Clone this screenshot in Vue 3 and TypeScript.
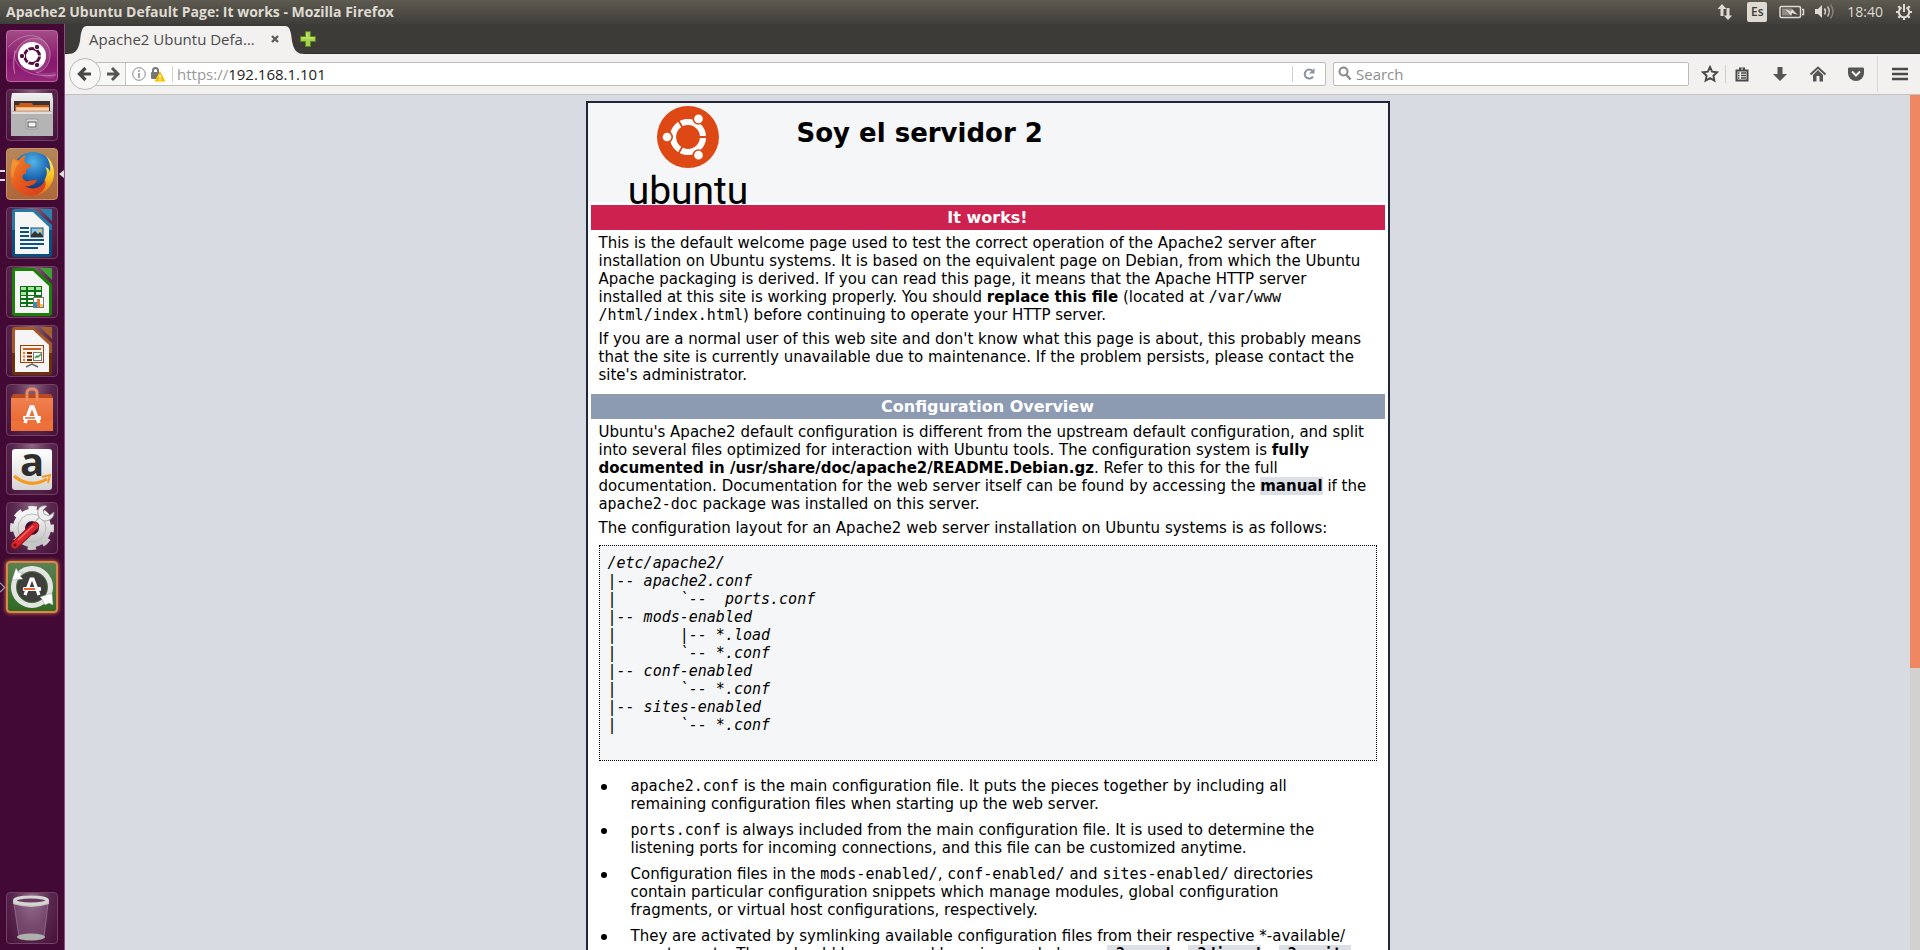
<script setup lang="ts">
import { ref } from 'vue'

const host = ref('192.168.1.101')
const query = ref('')

const tree = `/etc/apache2/
|-- apache2.conf
|       \`--  ports.conf
|-- mods-enabled
|       |-- *.load
|       \`-- *.conf
|-- conf-enabled
|       \`-- *.conf
|-- sites-enabled
|       \`-- *.conf

`
</script>

<template>
  <div class="desktop">
    <header class="panel">
      <span class="window-title">Apache2 Ubuntu Default Page: It works - Mozilla Firefox</span>
      <div class="indicators">
        <svg class="i-net" width="16" height="18" viewBox="0 0 16 18" fill="#dfdbd2">
          <path d="M5 1L9.500 6H6.500V13H3.500V6H0.500Z" />
          <path d="M11 17L6.800 12.500H9.500V5H12.500V12.500H15.200Z" />
        </svg>
        <span class="lang">Es</span>
        <svg class="i-bat" width="26" height="14" viewBox="0 0 26 14">
          <rect x="1" y="1.500" width="20.500" height="11" rx="1.500" fill="none" stroke="#dfdbd2" stroke-width="1.500" />
          <rect x="3" y="3.500" width="10" height="7" fill="#8e8b83" />
          <path d="M23 4.500h1.500v5H23" fill="none" stroke="#dfdbd2" stroke-width="1.500" />
          <path d="M6 4l6 2.500 1-2.500 6 6-6-2-1 2.500z" fill="#dfdbd2" />
        </svg>
        <svg class="i-vol" width="20" height="18" viewBox="0 0 20 18" fill="none">
          <path d="M0 6h3l4-4v13l-4-4H0z" fill="#dfdbd2" />
          <path d="M9.500 5.500q2 3 0 6" stroke="#dfdbd2" stroke-width="1.500" />
          <path d="M12.500 3.500q3.500 5 0 10" stroke="#c5c1b9" stroke-width="1.500" />
          <path d="M15.500 1.500q5 7 0 14" stroke="#858279" stroke-width="1.500" />
        </svg>
        <span class="clock">18:40</span>
        <svg class="i-gear" width="18" height="18" viewBox="0 0 18 18" fill="none" stroke="#dfdbd2">
          <path d="M6.500 4.500A5.200 5.200 0 1 0 11.500 4.500" stroke-width="2" />
          <path d="M9 1v8" stroke-width="2" />
          <path d="M1 9h3M14 9h3M3.300 3.300l2 2M14.700 3.300l-2 2M3.300 14.700l2-2M14.700 14.700l-2-2M9 14v3" stroke-width="2.200" />
        </svg>
      </div>
    </header>

    <nav class="launcher" aria-label="Launcher">
      <button class="tile dash" aria-label="Dash">
        <svg viewBox="0 0 52 52">
          <g fill="none" stroke="#e3b4d6" stroke-opacity=".45">
            <path d="M9 44C2 22 18 4 34 9 50 16 46 40 30 43" />
            <path d="M50 45C22 49 5 35 9 20M2 17C16 2 34 2 42 16" />
          </g>
          <path d="M9 44C2 22 18 4 34 9 50 16 46 40 30 43 46 52 50 48 50 42 30 46 12 40 9 20z" fill="#fff" fill-opacity=".12" />
          <circle cx="26" cy="26" r="14" fill="#fff" />
          <circle cx="26" cy="26" r="7.500" fill="none" stroke="#54103f" stroke-width="3" />
          <path d="M26 26h11M26 26l-6-10M26 26l-6 10" stroke="#fff" stroke-width="1.200" />
          <circle cx="26" cy="26" r="5.500" fill="#fff" />
          <g fill="#54103f" stroke="#fff"><circle cx="16" cy="26" r="2.700" /><circle cx="31" cy="17" r="2.700" /><circle cx="31" cy="35" r="2.700" /></g>
        </svg>
      </button>
      <button class="tile" aria-label="Files">
        <svg viewBox="0 0 52 52">
          <defs><linearGradient id="cab" x1="0" y1="0" x2="0" y2="1"><stop offset="0" stop-color="#f2f2f2" /><stop offset="1" stop-color="#aaa" /></linearGradient></defs>
          <path d="M6 4h40l1 6v33H5V10z" fill="url(#cab)" />
          <rect x="8" y="12" width="36" height="12" fill="#3d3431" />
          <path d="M9 16h4l1-2h12l1 2h16v8H9z" fill="#c85a1b" />
          <path d="M10 18h33v4H10z" fill="#f6ae72" />
          <path d="M11 20h32" stroke="#fff2dc" />
          <path d="M6 22h40l1 3v22H5V25z" fill="#b4b4b4" />
          <path d="M6 24h40" stroke="#ddd" stroke-width="2" />
          <rect x="20" y="30" width="12" height="10" rx="2" fill="#d8d8d8" stroke="#999" />
          <rect x="22" y="33" width="8" height="5" fill="#f3f3f3" stroke="#555" />
        </svg>
      </button>
      <button class="tile fox running" aria-label="Firefox">
        <svg viewBox="0 0 52 52">
          <defs>
            <radialGradient id="globe" cx=".5" cy=".25" r=".7"><stop offset="0" stop-color="#53b4e8" /><stop offset=".55" stop-color="#1e6ab5" /><stop offset="1" stop-color="#132f6b" /></radialGradient>
            <linearGradient id="fire" x1="0" y1="0" x2="1" y2="1"><stop offset="0" stop-color="#f08b2c" /><stop offset=".5" stop-color="#e5571d" /><stop offset="1" stop-color="#d33b1c" /></linearGradient>
            <linearGradient id="tail" x1="0" y1="0" x2="0" y2="1"><stop offset="0" stop-color="#fff27a" /><stop offset=".5" stop-color="#fbc623" /><stop offset="1" stop-color="#ea6a1c" /></linearGradient>
          </defs>
          <circle cx="27" cy="24" r="20" fill="url(#globe)" />
          <path d="M40 8C50 16 50 30 44 38 38 47 28 49 20 46 32 46 38 40 39 31 42 26 41 21 39 19 43 20 43 22 44 24 45 18 43 12 40 8z" fill="url(#tail)" />
          <path d="M7 10C9 12 11 12 13 12 15 9 18 8 20 7 18 10 18 13 19 15L25 17C25 20 22 20 20 22L20 26C17 25 15 29 18 32 22 35 27 31 31 32 29 37 23 39 19 38 26 43 36 40 39 32 42 40 34 48 24 48 12 47 4 38 4 27 4 20 6 15 7 10z" fill="url(#fire)" />
          <path d="M7 11C5 17 4 24 7 31 8 21 11 17 14 15z" fill="#f59c35" fill-opacity=".7" />
        </svg>
      </button>
      <button class="tile" aria-label="LibreOffice Writer">
        <svg viewBox="0 0 52 52">
          <path d="M9 2h19l18 16v29q0 3-3 3H9q-3 0-3-3V5q0-3 3-3z" fill="#0b4f7f" />
          <path d="M9 2h19l18 16v5H6V5q0-3 3-3z" fill="#2b77a5" />
          <path d="M9 5h18l16 15v27H9z" fill="#f5f5f5" />
          <path d="M34 2h12v12z" fill="#2f80ac" />
          <path d="M14 21h9M14 25h9M14 29h9M14 33h24M14 37h24M14 41h18" stroke="#0e537f" stroke-width="2" />
          <rect x="25" y="21" width="12" height="9" fill="#8fc7e8" stroke="#0e537f" />
          <path d="M25 30v-2l4-4 3 3 2-2 3 4v1z" fill="#333" />
          <circle cx="34" cy="23.500" r="1.500" fill="#f4c842" />
        </svg>
      </button>
      <button class="tile" aria-label="LibreOffice Calc">
        <svg viewBox="0 0 52 52">
          <path d="M9 2h19l18 16v29q0 3-3 3H9q-3 0-3-3V5q0-3 3-3z" fill="#1b8007" />
          <path d="M9 5h18l16 15v27H9z" fill="#f5f5f5" />
          <path d="M34 2h12v12z" fill="#3fa136" />
          <rect x="14" y="20" width="22" height="21" fill="#0e7015" />
          <g fill="#a9e3a0"><path d="M15 21h5v3h-5zM22 21h6v3h-6zM30 21h5v3h-5zM15 26h5v3h-5z" /></g>
          <path d="M22 26h6v3h-6zM30 26h5v3h-5zM15 30h5v2h-5zM22 30h6v2h-6zM15 34h5v2h-5zM22 34h6v2h-6zM15 38h5v2h-5zM22 38h6v2h-6z" fill="#f0fff0" />
          <rect x="27.500" y="31.500" width="10" height="10" fill="#fff" stroke="#777" />
          <path d="M28 36h3v5h-3z" fill="#2c8ed0" /><path d="M31 33h3v8h-3z" fill="#e57524" /><path d="M34 38h3v3h-3z" fill="#f4c842" />
        </svg>
      </button>
      <button class="tile" aria-label="LibreOffice Impress">
        <svg viewBox="0 0 52 52">
          <path d="M9 2h19l18 16v29q0 3-3 3H9q-3 0-3-3V5q0-3 3-3z" fill="#6b3008" />
          <path d="M9 2h19l18 16v10H6V5q0-3 3-3z" fill="#a4592a" />
          <path d="M9 5h18l16 15v27H9z" fill="#f5f5f5" />
          <path d="M34 2h12v12z" fill="#a4602f" />
          <rect x="14.500" y="20.500" width="23" height="17" fill="#fdf3ea" stroke="#a33e03" />
          <path d="M17 24h18" stroke="#c2622a" stroke-width="2" />
          <path d="M17 28h2M17 31.500h2M17 35h2" stroke="#e7774b" stroke-width="2" />
          <path d="M21 28h5M21 31.500h5M21 35h5" stroke="#7a2a00" stroke-width="2" />
          <rect x="27.500" y="27.500" width="8" height="8" fill="#fff" stroke="#777" />
          <path d="M29 33l2-2 1 1 3-3" fill="none" stroke="#2b9b35" stroke-width="1.500" />
          <path d="M26 38v2M20 42l6-3 6 3" fill="none" stroke="#666" stroke-width="1.500" />
        </svg>
      </button>
      <button class="tile" aria-label="Ubuntu Software">
        <svg viewBox="0 0 52 52">
          <defs><linearGradient id="bag" x1="0" y1="0" x2="0" y2="1"><stop offset="0" stop-color="#ef8150" /><stop offset="1" stop-color="#e8612a" /></linearGradient></defs>
          <path d="M5 14l2-4h38l2 4z" fill="#b84a1e" />
          <rect x="5" y="14" width="42" height="33" fill="url(#bag)" />
          <path d="M5 37h42v10H5z" fill="#f0783f" fill-opacity=".6" />
          <path d="M21 17V9q0-4 5-4t5 4v8" fill="none" stroke="#e88c62" stroke-width="3" />
          <path d="M19 39L25 23h2l6 16" fill="none" stroke="#fff" stroke-width="3.500" />
          <rect x="17" y="32" width="18" height="4" rx="1" fill="#fff" />
          <path d="M19 34h10" stroke="#e8612a" stroke-width="1.500" />
        </svg>
      </button>
      <button class="tile" aria-label="Amazon">
        <svg viewBox="0 0 52 52">
          <defs><linearGradient id="amz" x1="0" y1="0" x2="0" y2="1"><stop offset="0" stop-color="#fff" /><stop offset="1" stop-color="#d4d4d4" /></linearGradient></defs>
          <rect x="6" y="6" width="40" height="41" rx="3" fill="url(#amz)" />
          <text x="26" y="33" text-anchor="middle" class="amazon-a">a</text>
          <path d="M8 33q16 13 33 3" fill="none" stroke="#f79a1c" stroke-width="3" />
          <path d="M36 34l8-2-2 8" fill="none" stroke="#f79a1c" stroke-width="2" />
        </svg>
      </button>
      <button class="tile" aria-label="System Settings">
        <svg viewBox="0 0 52 52">
          <defs><linearGradient id="cog" x1="0" y1="0" x2="0" y2="1"><stop offset="0" stop-color="#f4f4f4" /><stop offset="1" stop-color="#c6c6c6" /></linearGradient></defs>
          <circle cx="26" cy="26" r="19" fill="none" stroke="url(#cog)" stroke-width="6" stroke-dasharray="8 6.920" stroke-dashoffset="4" />
          <circle cx="26" cy="26" r="13" fill="none" stroke="url(#cog)" stroke-width="12" />
          <circle cx="26" cy="26" r="14" fill="none" stroke="#bbb" />
          <circle cx="26" cy="26" r="6.500" fill="#3c0f35" />
          <path d="M27 26l8-9" stroke="#aaa" stroke-width="6" />
          <path d="M28 25L36 17" stroke="#eee" stroke-width="5" />
          <path d="M34 5q-4 4-1 10 4 6 10 3 5-2 5-8l-5 4-5-2-1-4 4-4q-3-1-7 1z" fill="#eee" stroke="#999" stroke-width=".8" />
          <path d="M9 43L29 24" stroke="#8e1218" stroke-width="8.500" stroke-linecap="round" />
          <path d="M9 43L29 24" stroke="#d9262c" stroke-width="6.500" stroke-linecap="round" />
          <path d="M12 38L27 24" stroke="#f0686a" stroke-width="1.500" />
          <circle cx="9" cy="43" r="1.500" fill="#5b0a0e" />
        </svg>
      </button>
      <button class="tile updater" aria-label="Software Updater">
        <svg viewBox="0 0 52 52">
          <circle cx="26" cy="26" r="15" fill="#3e3e3c" />
          <circle cx="26" cy="26" r="18.500" fill="none" stroke="#e4e4e2" stroke-width="5" />
          <path d="M10 7l-4 12 11-1-3-3 3-4-4 1z" fill="#fff" stroke="#999" stroke-width=".5" />
          <path d="M46 32l1 12-4-2-4 2-3-6-2-2z" fill="#fff" stroke="#999" stroke-width=".5" />
          <path d="M19 34L25 18h2l6 16" fill="none" stroke="#fff" stroke-width="3.200" />
          <rect x="17" y="26" width="18" height="4" rx="1" fill="#fff" />
          <path d="M18 28h11" stroke="#f0622a" stroke-width="2" />
        </svg>
      </button>
      <button class="tile trash" aria-label="Trash">
        <svg viewBox="0 0 52 52">
          <path d="M8 12l5 33q12 4 25 0l4-33z" fill="#c9a3c4" fill-opacity=".25" stroke="#b793b3" stroke-opacity=".5" />
          <ellipse cx="25" cy="45" rx="14" ry="3.500" fill="#aeb0ac" />
          <path d="M7 9v3q18 6 36 0V9q-18 6-36 0z" fill="#c2c2be" />
          <ellipse cx="25" cy="8.500" rx="16.500" ry="3.500" fill="#6a3a62" stroke="#d6d6d2" stroke-width="3" />
        </svg>
      </button>
    </nav>

    <div class="browser">
      <div class="tabs">
        <svg class="tab-edge" width="20" height="28" viewBox="0 0 20 28"><path d="M0 28C8 28 11 25 13 15 14 6 15 0 20 0V28z" fill="#f2f1f0" /></svg>
        <div class="tab">
          <span>Apache2 Ubuntu Defa…</span>
          <button aria-label="Close tab"><svg width="10" height="10" viewBox="0 0 10 10"><path d="M2 2l6 6M8 2l-6 6" stroke="#5d5d5b" stroke-width="2.400" /></svg></button>
        </div>
        <svg class="tab-edge" width="20" height="28" viewBox="0 0 20 28"><path d="M20 28C12 28 9 25 7 15 6 6 5 0 0 0V28z" fill="#f2f1f0" /></svg>
        <button class="new-tab" aria-label="New tab"><svg width="16" height="16" viewBox="0 0 16 16"><path d="M5.500 .5h5v5h5v5h-5v5h-5v-5h-5v-5h5z" fill="#a6cf4a" stroke="#5d8a1c" /><path d="M7 2v4M2 7h12" stroke="#d3ec92" /></svg></button>
      </div>

      <div class="toolbar">
        <button class="back" aria-label="Back"><svg width="16" height="16" viewBox="0 0 16 16"><path d="M14 8H3M8.500 2L2.500 8l6 6" fill="none" stroke="#474747" stroke-width="3.200" /></svg></button>
        <div class="urlbar">
          <button class="fwd" aria-label="Forward"><svg width="14" height="16" viewBox="0 0 14 16"><path d="M1 8h10M6 2l6 6-6 6" fill="none" stroke="#555" stroke-width="3" /></svg></button>
          <svg class="info" width="14" height="14" viewBox="0 0 14 14"><circle cx="7" cy="7" r="6.300" fill="none" stroke="#888" /><path d="M7 6v5M7 3v1.800" stroke="#888" stroke-width="1.500" /></svg>
          <svg class="lock" width="16" height="16" viewBox="0 0 16 16"><path d="M3 7V4.500Q3 2 5.500 2T8 4.500V7" fill="none" stroke="#777" stroke-width="2" /><rect x="1" y="6" width="9" height="7" rx="1" fill="#777" /><path d="M10 5l5.500 10.500h-11z" fill="#ffbf00" /><path d="M10 9v3M10 13v1.200" stroke="#fff" stroke-width="1.500" /></svg>
          <label class="scheme" for="address">https://</label>
          <input id="address" v-model="host" type="text" aria-label="Address" />
          <button class="reload" aria-label="Reload"><svg width="14" height="14" viewBox="0 0 14 14"><path d="M11 9.500A4.500 4.500 0 1 1 10.500 4" fill="none" stroke="#8794a2" stroke-width="2" /><path d="M12.500 1v5.500H7z" fill="#8794a2" /></svg></button>
        </div>
        <div class="search">
          <svg width="14" height="16" viewBox="0 0 14 16"><circle cx="5.500" cy="5.500" r="4" fill="none" stroke="#8a8a8a" stroke-width="2" /><path d="M8.500 9l4 4.500" stroke="#8a8a8a" stroke-width="2.500" /></svg>
          <input v-model="query" type="text" placeholder="Search" aria-label="Search" />
        </div>
        <div class="tools">
          <button class="star" aria-label="Bookmark"><svg viewBox="0 0 18 18"><path d="M9 2l2.100 4.700 5 .5-3.700 3.500 1 5L9 13.200l-4.400 2.500 1-5L1.900 7.200l5-.5z" fill="none" stroke="#4a4a4a" stroke-width="1.900" /></svg></button>
          <button aria-label="Bookmarks list"><svg viewBox="0 0 18 18"><path d="M2.500 4.500H6V2.500h6v2h3.500v12h-13z" fill="#4a4a4a" /><path d="M8 4h2" stroke="#f2f1f0" /><path d="M4.500 6.500h9v8h-9z" fill="#f2f1f0" /><path d="M5 8h1.500M8 8h5M5 10.500h1.500M8 10.500h5M5 13h1.500M8 13h5" stroke="#4a4a4a" stroke-width="1.300" /></svg></button>
          <button aria-label="Downloads"><svg viewBox="0 0 18 18"><path d="M6.500 2h5v7H16l-7 7-7-7h4.500z" fill="#555" /></svg></button>
          <button aria-label="Home"><svg viewBox="0 0 18 18"><path d="M1.500 9.500L9 2.500l7.500 7" fill="none" stroke="#555" stroke-width="2" /><path d="M4 10l5-5 5 5v6.500h-3.500V11h-3v5.500H4z" fill="#555" /></svg></button>
          <button aria-label="Pocket"><svg viewBox="0 0 18 18"><path d="M2 2.500h14q1 0 1 1.500v4a8 8 0 0 1-16 0V4q0-1.500 1-1.500z" fill="#555" /><path d="M5 6.500l4 4 4-4" fill="none" stroke="#f2f1f0" stroke-width="2" /></svg></button>
          <button class="menu" aria-label="Menu"><svg viewBox="0 0 18 18"><path d="M1 4h16M1 9h16M1 14h16" stroke="#4a4a4a" stroke-width="2.600" /></svg></button>
        </div>
      </div>

      <div class="viewport">
        <main class="canvas">
          <article class="page">
            <div class="page-header">
              <div class="logo">
                <svg width="62" height="62" viewBox="-31 -31 62 62">
                  <circle r="31" fill="#dd4814" />
                  <circle r="15" fill="none" stroke="#fff" stroke-width="6.200" />
                  <path d="M11 0h9M-5.500 -9.500l-4.500 -7.800M-5.500 9.500l-4.500 7.800" stroke="#dd4814" stroke-width="1.800" />
                  <g fill="#fff" stroke="#dd4814" stroke-width="1.700"><circle cx="-21" cy="0" r="5.200" /><circle cx="10.500" cy="-18.200" r="5.200" /><circle cx="10.500" cy="18.200" r="5.200" /></g>
                </svg>
                <span>ubuntu</span>
              </div>
              <h1>Soy el servidor 2</h1>
            </div>

            <section>
              <h2 class="red">It works!</h2>
              <div class="text">
                <p>This is the default welcome page used to test the correct operation of the Apache2 server after installation on Ubuntu systems. It is based on the equivalent page on Debian, from which the Ubuntu Apache packaging is derived. If you can read this page, it means that the Apache HTTP server<br />installed at this site is working properly. You should <b>replace this file</b> (located at <code>/var/www<br />/html/index.html</code>) before continuing to operate your HTTP server.</p>
                <p>If you are a normal user of this web site and don't know what this page is about, this probably means that the site is currently unavailable due to maintenance. If the problem persists, please contact the site's administrator.</p>
              </div>
            </section>

            <section>
              <h2>Configuration Overview</h2>
              <div class="text">
                <p>Ubuntu's Apache2 default configuration is different from the upstream default configuration, and split into several files optimized for interaction with Ubuntu tools. The configuration system is <b>fully documented in /usr/share/doc/apache2/README.Debian.gz</b>. Refer to this for the full documentation. Documentation for the web server itself can be found by accessing the <a href="#manual">manual</a> if the <code>apache2-doc</code> package was installed on this server.</p>
                <p>The configuration layout for an Apache2 web server installation on Ubuntu systems is as follows:</p>
                <pre>{{ tree }}</pre>
                <ul>
                  <li><code>apache2.conf</code> is the main configuration file. It puts the pieces together by including all remaining configuration files when starting up the web server.</li>
                  <li><code>ports.conf</code> is always included from the main configuration file. It is used to determine the listening ports for incoming connections, and this file can be customized anytime.</li>
                  <li>Configuration files in the <code>mods-enabled/</code>, <code>conf-enabled/</code> and <code>sites-enabled/</code> directories contain particular configuration snippets which manage modules, global configuration fragments, or virtual host configurations, respectively.</li>
                  <li>They are activated by symlinking available configuration files from their respective *-available/ counterparts. These should be managed by using our helpers <code>&nbsp;<a href="#a2enmod">a2enmod</a>, <a href="#a2dismod">a2dismod</a>, <a href="#a2ensite">a2ensite</a>,</code></li>
                </ul>
              </div>
            </section>
          </article>
        </main>
        <div class="scrollbar"><div class="thumb"></div></div>
      </div>
    </div>
  </div>
</template>

<style>
html, body { margin: 0; overflow: hidden; }
</style>

<style scoped>
* { box-sizing: border-box; }
button { border: 0; padding: 0; margin: 0; background: none; display: flex; align-items: center; justify-content: center; }
input { border: 0; outline: 0; padding: 0; background: none; min-width: 0; flex: 1; font: inherit; color: #222; }

.desktop {
  height: 100vh;
  display: grid;
  grid-template: 24px minmax(0, 1fr) / 65px minmax(0, 1fr);
  font: 15px/20px "Open Sans", "Noto Sans", sans-serif;
  background: #3c3b37;
}

.panel {
  grid-column: 1 / -1;
  display: flex;
  align-items: center;
  justify-content: space-between;
  padding: 0 7px 0 6px;
  color: #dfdbd2;
  background: linear-gradient(#5d5a50, #3f3e3a);
}
.window-title { font-size: 14px; font-weight: 700; }
.indicators { display: flex; align-items: center; }
.lang { margin: 0 12px 0 14px; width: 20px; height: 20px; border-radius: 2px; background: #dfdbd2; color: #3c3b37; font-size: 12px; font-weight: 600; line-height: 20px; text-align: center; }
.i-vol { margin-left: 10px; }
.clock { margin: 0 12px; font-size: 14px; }

.launcher {
  display: flex;
  flex-direction: column;
  gap: 7px;
  padding: 6px;
  background: #420934;
  border-right: 1px solid #8d4d84;
}
.tile {
  position: relative;
  width: 52px;
  height: 52px;
  flex: none;
  border: 1px solid #724266;
  border-radius: 4px;
  background: radial-gradient(ellipse at 50% 0, #8b6581, #5b2a50 50%, #461039);
}
.tile svg { width: 52px; height: 52px; flex: none; }
.dash { border-color: #c162ab; background: linear-gradient(#a34c86, #86176b 60%, #94267a); }
.fox { border-color: #cb9468; background: linear-gradient(#b5875b, #ad6639); }
.updater { border: 2px solid #d98945; background: linear-gradient(#5a8050, #2f6a24); box-shadow: 0 0 4px #e08a4a; }
.running::before {
  content: "";
  position: absolute;
  left: -7px;
  top: 21px;
  width: 5px;
  height: 7px;
  border: solid #ddd;
  border-width: 2px 0;
}
.running::after {
  content: "";
  position: absolute;
  right: -7px;
  top: 21px;
  border: 4px solid transparent;
  border-right: 5px solid #ddd;
  border-left: 0;
}
.updater::before {
  content: "";
  position: absolute;
  left: -11px;
  top: 21px;
  width: 6px;
  height: 6px;
  border: solid #8fb3cf;
  border-width: 1px 1px 0 0;
  transform: rotate(45deg);
}
.trash { margin-top: auto; }
.amazon-a { font: 700 40px "Open Sans", sans-serif; fill: #2e2e2e; }

.browser { display: flex; flex-direction: column; min-height: 0; }
.tabs { height: 30px; flex: none; display: flex; align-items: flex-end; border-bottom: 1px solid #2f2e2b; padding-left: 2px; }
.tab-edge { margin-bottom: -1px; position: relative; }
.tab {
  width: 198px;
  height: 28px;
  margin-bottom: -1px;
  position: relative;
  display: flex;
  align-items: center;
  justify-content: space-between;
  padding: 0 5px 2px 2px;
  background: #f2f1f0;
  color: #4c4c4c;
}
.new-tab { height: 28px; margin-left: -5px; }

.toolbar {
  height: 41px;
  flex: none;
  display: flex;
  align-items: center;
  padding: 0 9px 0 4px;
  background: #f2f1f0;
  border-bottom: 1px solid #c3c2c0;
}
.back { position: relative; width: 32px; height: 32px; flex: none; border: 1px solid #b9b8b6; border-radius: 50%; background: #f7f7f6; }
.urlbar, .search { height: 24px; display: flex; align-items: center; border: 1px solid #bfbdbb; background: #fff; border-radius: 2px; }
.urlbar { flex: 1; margin-left: -6px; }
.fwd { width: 30px; height: 22px; padding-left: 4px; background: #f7f7f6; border-right: 1px solid #c6c5c3; }
.info { margin: 0 4px 0 6px; }
.scheme { margin-left: 6px; padding-left: 4px; border-left: 1px solid #d0d0d0; line-height: 16px; color: #999; }
.reload { width: 33px; height: 16px; border-left: 1px solid #d0d0d0; }
.search { width: 356px; margin-left: 7px; padding-left: 4px; gap: 4px; }
.search input::placeholder { color: #8e8e8e; opacity: 1; }
.tools { display: flex; align-items: center; padding-left: 6px; }
.tools button { width: 38px; height: 36px; }
.tools .star { width: 31px; height: 18px; margin-right: -3px; border-right: 1px solid #cfcecc; }
.tools button svg { width: 18px; height: 18px; }
.tools .menu { width: 34px; margin-left: 2px; padding-left: 10px; border-left: 1px solid #d8d7d5; }

.viewport { flex: 1; min-height: 0; display: flex; overflow: hidden; background: #d8dbe2; }
.canvas { flex: 1; padding: 6px 0; overflow: hidden; font: 15px/18px "DejaVu Sans", Verdana, sans-serif; color: #000; }
.scrollbar { width: 10px; background: #d2d1d0; }
.thumb { height: 67%; background: #f08763; }

.page { max-width: 804px; margin: 0 auto; border: 2px solid #212738; background: #fff; }
.page-header { height: 99px; display: flex; background: #f5f6f7; }
.logo { width: 201px; flex: none; padding-top: 3px; display: flex; flex-direction: column; align-items: center; }
.logo svg { flex: none; }
.logo span { font: 400 39px/46px Roboto, sans-serif; }
h1 { margin: 14px 0 0 8px; font-size: 26px; line-height: 32px; font-weight: 700; }
section { margin: 0 3px; }
.page-header + section { margin-top: 3px; }
h2 { margin: 0; font-size: 16px; line-height: 25px; font-weight: 700; text-align: center; color: #fff; background: #8d9bb2; }
.red { background: #cd214f; }
.text { padding: 4px 8px; }
p { margin: 0 0 6px; }
code, pre { font-family: "DejaVu Sans Mono", monospace; font-size: 15px; line-height: 18px; }
a { color: #000; font-weight: 700; text-decoration: none; background: #dcdfe6; }
pre { margin: 8px 0 16px; padding: 8px; border: 1px dotted #000; background: #f5f6f7; font-style: italic; }
ul { margin: 0; padding: 0 16px 0 32px; list-style: none; }
li { margin-bottom: 8px; position: relative; }
li::before {
  content: "";
  position: absolute;
  left: -30px;
  top: 7px;
  width: 6px;
  height: 6px;
  border-radius: 50%;
  background: #000;
}
</style>
